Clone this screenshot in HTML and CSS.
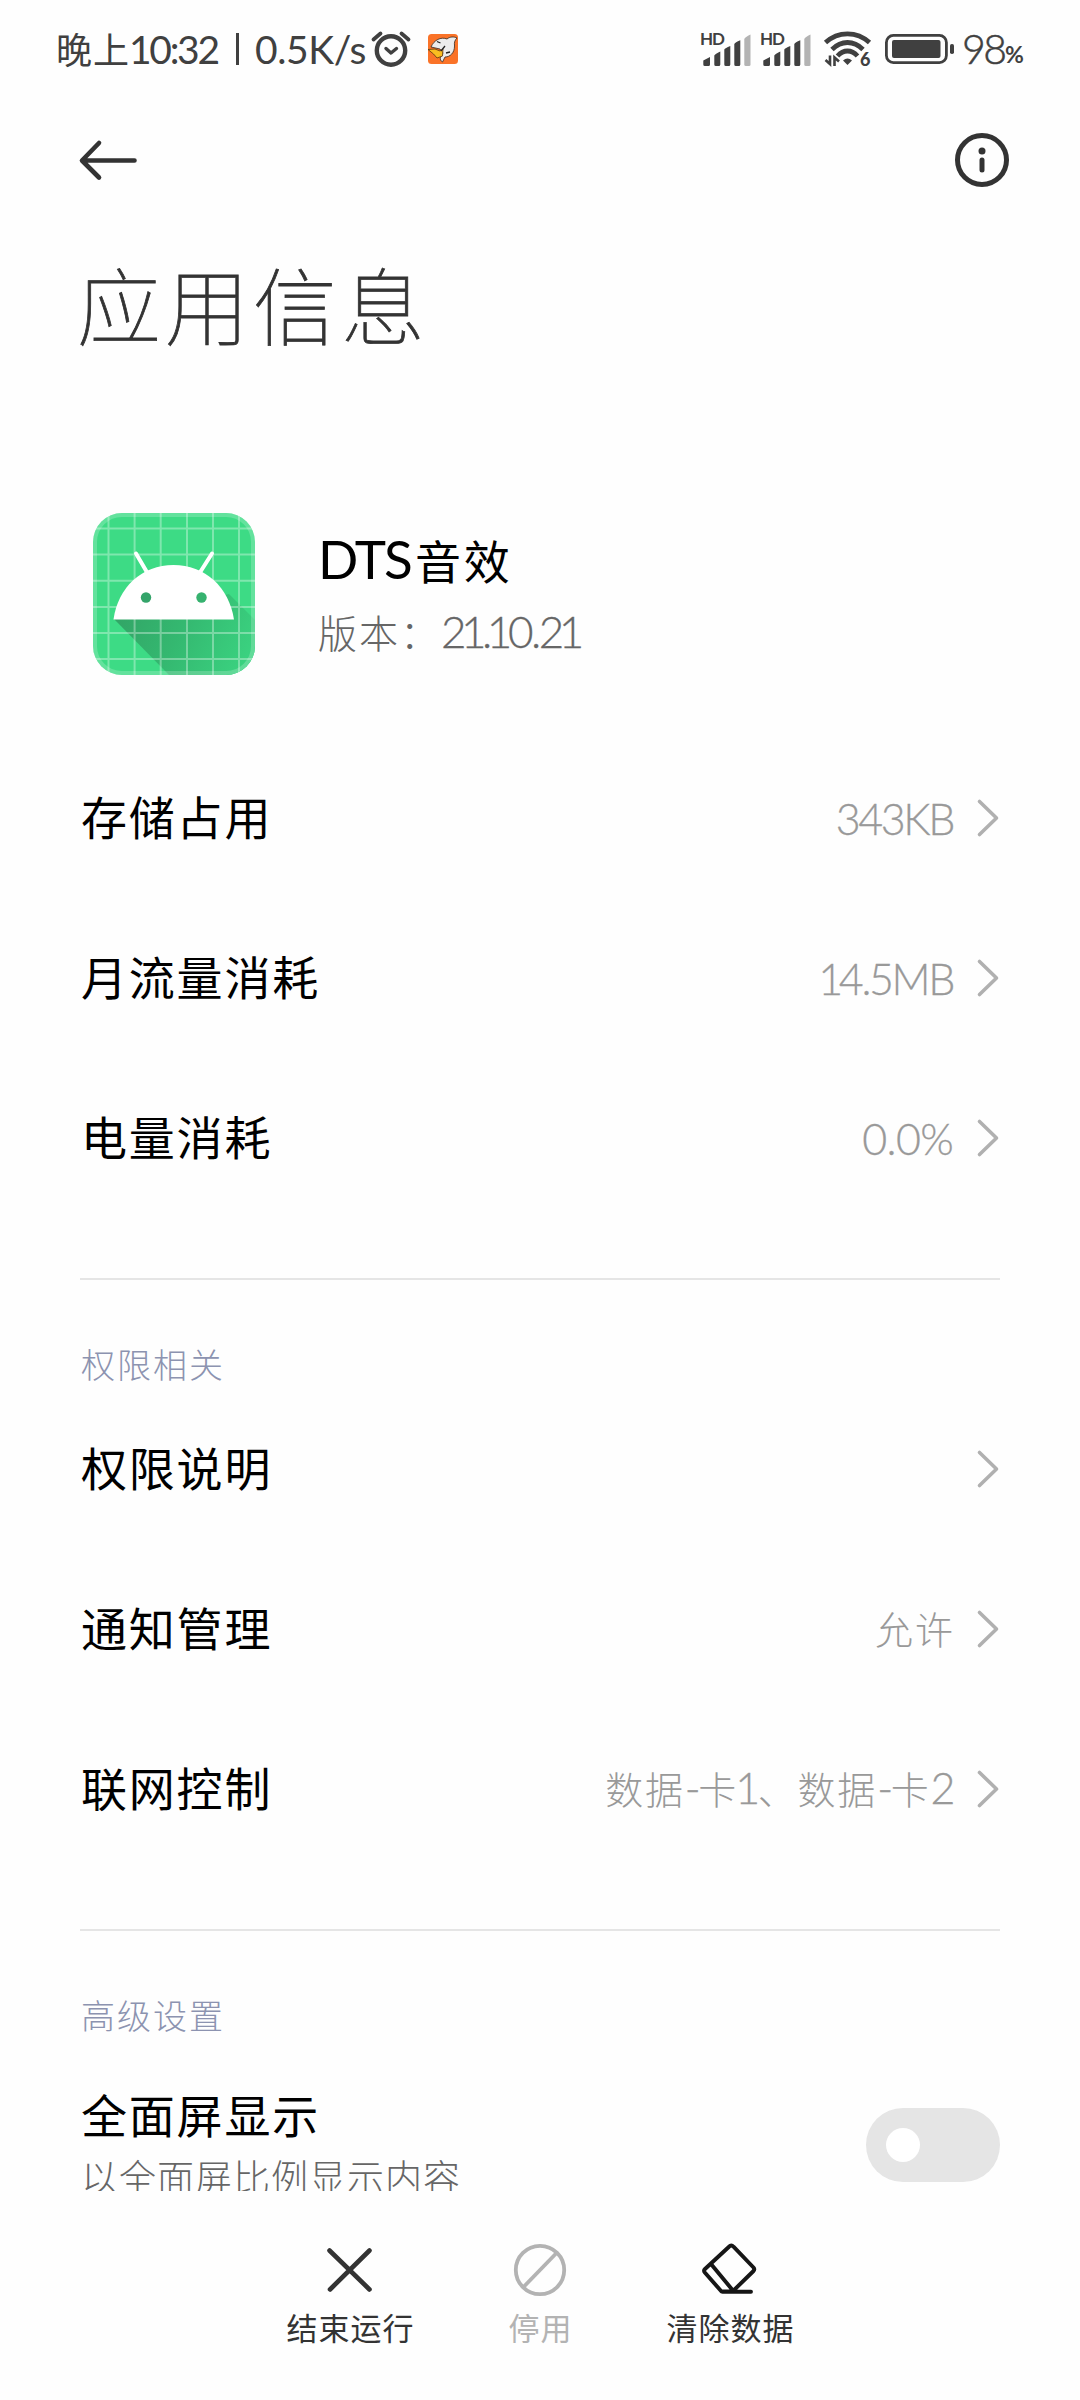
FILE: index.html
```html
<!DOCTYPE html>
<html lang="zh-CN">
<head>
<meta charset="utf-8">
<title>应用信息</title>
<link rel="stylesheet" href="styles.css">
</head>
<body>
<div class="screen">
  <header class="status">
    <div class="status-left">
      <span class="clock-prefix">晚上</span><span class="clock">10:32</span><span class="bar"></span><span class="speed">0.5K/s</span>
      <svg class="alarm" width="40" height="36" viewBox="0 0 40 36" fill="none" stroke="#404040" stroke-linecap="round">
        <circle cx="20" cy="19.500" r="14.200" stroke-width="4.400"/>
        <path d="M2.500 8.500 9.500 2.500M37.500 8.500 30.500 2.500" stroke-width="3.800"/>
        <path d="M15 17.500 20 22 25.500 17.500" stroke-width="3.400" stroke-linejoin="round"/>
      </svg>
      <svg class="shark" width="30" height="30" viewBox="0 0 30 30">
        <rect width="30" height="30" rx="3.500" fill="#fa7328"/>
        <path d="M3 13C6 6 13 2.500 19 5 22 2.500 26 2.500 29 4 27 6 26 8 26.500 12 26.500 19 22 23 17 23L14.500 28C12.500 27 12 25 12.500 23.500L15 19 12 15Z" fill="#ececec" stroke="#33281f" stroke-width=".8"/>
        <path d="M0 15.500 7 15 12 17 15 15 14.500 22 9 24 5.500 20Z" fill="#f9bd20" stroke="#5a3512" stroke-width=".8"/>
        <path d="M9 7.500 12.500 9M17 12 13 17M18 19 22 18" stroke="#222" stroke-width="1.300" fill="none"/>
      </svg>
    </div>
    <div class="status-right">
      <svg class="signal" width="50" height="36" viewBox="0 0 50 36" fill="#404040">
        <text class="hd" x="-1" y="14" textLength="25">HD</text>
        <path d="M2.300 29.500 9 26V33.500Q9 35 7.500 35H3.800Q2.300 35 2.300 33.500ZM13.300 24.500Q14 23 19.300 20.500V33.500Q19.300 35 17.800 35H14.800Q13.300 35 13.300 33.500ZM23.300 18.500Q24 17 29.300 15V33.500Q29.300 35 27.800 35H24.800Q23.300 35 23.300 33.500ZM33.300 13Q34 11.500 39.300 9.300V33.500Q39.300 35 37.800 35H34.800Q33.300 35 33.300 33.500Z"/>
        <path fill="#b3b3b3" d="M43.300 8Q44 6 49.500 3.500V33.500Q49.500 35 48 35H44.800Q43.300 35 43.300 33.500Z"/>
      </svg>
      <svg class="signal" width="50" height="36" viewBox="0 0 50 36" fill="#404040">
        <text class="hd" x="-1" y="14" textLength="25">HD</text>
        <path d="M2.300 29.500 9 26V33.500Q9 35 7.500 35H3.800Q2.300 35 2.300 33.500ZM13.300 24.500Q14 23 19.300 20.500V33.500Q19.300 35 17.800 35H14.800Q13.300 35 13.300 33.500ZM23.300 18.500Q24 17 29.300 15V33.500Q29.300 35 27.800 35H24.800Q23.300 35 23.300 33.500ZM33.300 13Q34 11.500 39.300 9.300V33.500Q39.300 35 37.800 35H34.800Q33.300 35 33.300 33.500Z"/>
        <path fill="#b3b3b3" d="M43.300 8Q44 6 49.500 3.500V33.500Q49.500 35 48 35H44.800Q43.300 35 43.300 33.500Z"/>
      </svg>
      <svg class="wifi" width="48" height="38" viewBox="0 0 48 38">
        <g fill="none" stroke="#404040" stroke-width="4.800">
          <path d="M1.500 12.500Q11 3.800 23.500 3.800T45.500 12.500"/>
          <path d="M8 19.500Q15 12.500 23.500 12.500T39 19.500"/>
          <path d="M13.500 26Q18 21 23.500 21T33.500 26"/>
        </g>
        <path d="M19 30.500Q23.500 26.500 28 30.500L23.500 35Z" fill="#404040"/>
        <path d="M6 25.500V34L1.500 30M10.500 36V27.500L15 31.500" fill="none" stroke="#404040" stroke-width="2.600"/>
        <text class="six" x="36" y="35.500">6</text>
      </svg>
      <svg class="battery" width="70" height="30" viewBox="0 0 70 30">
        <rect x="1.400" y="1.400" width="60" height="27.200" rx="7" fill="none" stroke="#404040" stroke-width="2.800"/>
        <rect x="7" y="6" width="48.500" height="18" rx="2" fill="#404040"/>
        <rect x="65" y="10" width="4" height="10" rx="1.800" fill="#404040"/>
      </svg>
      <span class="level">98</span><span class="percent">%</span>
    </div>
  </header>

  <nav class="appbar">
    <svg width="60" height="44" viewBox="0 0 60 44" fill="none" stroke="#333" stroke-width="4.600" stroke-linecap="round" stroke-linejoin="round">
      <path d="M55.500 22.500H3.500M20 5 3 22.500 20 39.500"/>
    </svg>
    <svg width="54" height="54" viewBox="0 0 54 54">
      <circle cx="27" cy="27" r="24.500" fill="none" stroke="#333" stroke-width="5"/>
      <circle cx="27" cy="18" r="3.500" fill="#333"/>
      <path d="M27 27V37" stroke="#333" stroke-width="5" stroke-linecap="round"/>
    </svg>
  </nav>

  <h1 class="title">应用信息</h1>

  <main class="content">
    <section class="app">
      <svg class="app-icon" width="162" height="162" viewBox="0 0 162 162">
        <defs>
          <clipPath id="round"><rect width="162" height="162" rx="29"/></clipPath>
          <linearGradient id="shade" x1="20" y1="105" x2="150" y2="170" gradientUnits="userSpaceOnUse">
            <stop offset="0" stop-color="#32a466"/><stop offset=".45" stop-color="#34b870"/><stop offset="1" stop-color="#3bd481"/>
          </linearGradient>
        </defs>
        <g clip-path="url(#round)">
          <rect width="162" height="162" fill="#3ddb85"/>
          <path d="M21 106 136 81 162 107V162H76Z" fill="url(#shade)"/>
          <path d="M15.500 0V162M41.600 0V162M67.700 0V162M94 0V162M120 0V162M146 0V162M0 15.500H162M0 41.600H162M0 67.700H162M0 94H162M0 120H162M0 146H162" stroke="#fff" stroke-opacity=".34" stroke-width="2"/>
          <rect x="2" y="2" width="158" height="158" rx="27" fill="none" stroke="#fff" stroke-opacity=".2" stroke-width="4"/>
          <path d="M43 40.500 55 61M119 40.500 106 61" stroke="#fff" stroke-width="4" stroke-linecap="round"/>
          <path d="M20.500 106.500C25 74 49 52 80.500 52S136 74 141 106.500Z" fill="#fff"/>
          <circle cx="53" cy="84.500" r="5.200" fill="#34a46a"/>
          <circle cx="108.500" cy="84.500" r="5.200" fill="#36b26f"/>
        </g>
      </svg>
      <div class="app-text">
        <div class="app-name"><span class="latin">DTS</span>音效</div>
        <div class="app-version">版本：<span class="latin">2<span class="one">1</span>.<span class="one">1</span>0.2<span class="one">1</span></span></div>
      </div>
    </section>

    <div class="row"><span class="label">存储占用</span><span class="value latin">343KB</span><svg class="chev" viewBox="0 0 22 38"><path d="M2.500 2.500 19.500 19 2.500 35.500"/></svg></div>
    <div class="row"><span class="label">月流量消耗</span><span class="value latin"><span class="one">1</span>4.5MB</span><svg class="chev" viewBox="0 0 22 38"><path d="M2.500 2.500 19.500 19 2.500 35.500"/></svg></div>
    <div class="row"><span class="label">电量消耗</span><span class="value latin percent-value">0.0%</span><svg class="chev" viewBox="0 0 22 38"><path d="M2.500 2.500 19.500 19 2.500 35.500"/></svg></div>

    <hr class="divider">
    <h2 class="group">权限相关</h2>
    <div class="row"><span class="label">权限说明</span><svg class="chev" viewBox="0 0 22 38"><path d="M2.500 2.500 19.500 19 2.500 35.500"/></svg></div>
    <div class="row"><span class="label">通知管理</span><span class="value han">允许</span><svg class="chev" viewBox="0 0 22 38"><path d="M2.500 2.500 19.500 19 2.500 35.500"/></svg></div>
    <div class="row"><span class="label">联网控制</span><span class="value han network">数据<span class="latin">-</span>卡<span class="latin one">1</span>、数据<span class="latin">-</span>卡<span class="latin">2</span></span><svg class="chev" viewBox="0 0 22 38"><path d="M2.500 2.500 19.500 19 2.500 35.500"/></svg></div>

    <hr class="divider">
    <h2 class="group">高级设置</h2>
    <div class="row switch-row">
      <div class="switch-text">
        <div class="label">全面屏显示</div>
        <div class="hint">以全面屏比例显示内容</div>
      </div>
      <div class="switch"><span class="knob"></span></div>
    </div>
  </main>

  <footer class="actions">
    <button class="action">
      <svg width="56" height="56" viewBox="0 0 56 56" fill="none" stroke="#333" stroke-width="4.600" stroke-linecap="round"><path d="M7.500 8.500 47.500 47.500M47.500 8.500 8 47.500"/></svg>
      <span>结束运行</span>
    </button>
    <button class="action disabled">
      <svg width="56" height="56" viewBox="0 0 56 56" fill="none" stroke="#b3b3b3" stroke-width="3.800"><circle cx="28" cy="28" r="24.200"/><path d="M44.500 11 11.500 45"/></svg>
      <span>停用</span>
    </button>
    <button class="action">
      <svg width="56" height="56" viewBox="0 0 56 56" fill="none" stroke="#161616" stroke-width="3.900" stroke-linecap="round" stroke-linejoin="round"><path d="M27 4.700Q29.300 2.300 31.500 4.700L51.500 25.500Q53 27.300 51.500 29L30.500 49.500 19.500 49.500 2.800 30.500Q1.300 28.700 3 27ZM9 22 30.500 48M20.500 49.700H49"/></svg>
      <span>清除数据</span>
    </button>
  </footer>
</div>
</body>
</html>
```
FILE: styles.css
```css
* { box-sizing: border-box; margin: 0; padding: 0; }

body {
  width: 1080px;
  height: 2400px;
  overflow: hidden;
  background: #fefefe;
  font-family: "Noto Sans CJK SC", sans-serif;
}

svg { display: block; flex: none; overflow: visible; }

.latin { font-family: Lato, sans-serif; }

.screen {
  display: flex;
  flex-direction: column;
  width: 1080px;
  height: 2400px;
}

/* Status bar */
.status {
  display: flex;
  justify-content: space-between;
  height: 98px;
  padding: 0 54px 0 56px;
  color: #404040;
}

.status-left, .status-right { display: flex; align-items: center; white-space: nowrap; }

.clock-prefix { width: 73px; padding-bottom: 3px; font-size: 36px; font-weight: 400; letter-spacing: 1px; }
.clock, .speed { font-family: Lato, sans-serif; font-size: 39px; line-height: 60px; }
.clock { width: 91px; letter-spacing: -2.3px; }
.bar { width: 3px; height: 32px; margin: 0 16px; background: #404040; }
.speed { width: 115px; letter-spacing: -.4px; }
.alarm { margin-left: 1px; }
.shark { margin-left: 17px; }

.signal { margin-right: 10px; }
.hd { font: 700 17px Lato, sans-serif; }
.six { font: 900 18px Lato, sans-serif; fill: #404040; }
.wifi { margin: 0 13px 0 3px; }
.battery { margin-right: 7px; }
.level { width: 43px; font: 300 41px/60px Lato, sans-serif; letter-spacing: -2.5px; -webkit-text-stroke: .5px #404040; }
.percent { width: 21px; padding-top: 9px; font: 700 23px/40px Lato, sans-serif; }

/* Navigation and title */
.appbar {
  display: flex;
  align-items: center;
  justify-content: space-between;
  height: 124px;
  padding: 0 71px 0 79px;
}

.title {
  height: 170px;
  padding-left: 77px;
  font-size: 84px;
  font-weight: 100;
  letter-spacing: 4px;
  line-height: 161px;
  color: #333;
  -webkit-text-stroke: .8px #333;
}

/* Scrolling content */
.content {
  height: 1799px;
  padding: 0 80px;
  overflow: hidden;
}

.app {
  display: flex;
  height: 346px;
  padding: 121px 0 0 13px;
}

.app-text { padding: 9px 0 0 63px; white-space: nowrap; }
.app-name { height: 74px; font-size: 46px; line-height: 74px; color: #000; letter-spacing: 2.6px; }
.app-name .latin { margin-right: 4px; font-size: 53px; letter-spacing: -1.8px; }
.app-version { height: 70px; font-size: 39px; font-weight: 300; line-height: 70px; color: #666; letter-spacing: 2px; }
.app-version .latin { font-size: 44px; letter-spacing: -2.5px; -webkit-text-stroke: .3px #666; }

.one { margin: 0 -2px 0 -3px; }

.row {
  display: flex;
  align-items: center;
  height: 160px;
}

.label {
  flex: 1;
  padding: 0 0 6px 1px;
  font-size: 46px;
  line-height: 68px;
  letter-spacing: 1.8px;
  color: #000;
}

.value {
  margin-right: 24px;
  font-size: 38px;
  font-weight: 300;
  letter-spacing: 2px;
  color: #999;
}

.value.han { padding-bottom: 4px; margin-right: 22px; }
.value.network { margin-right: 24px; letter-spacing: 1.8px; }
.value.latin, .value .latin { font-size: 43px; letter-spacing: -2.4px; -webkit-text-stroke: .3px #999; }
.value .latin.one { margin: 0 0 0 -3px; }
.value.percent-value { letter-spacing: -.7px; }

.chev {
  width: 22px;
  height: 38px;
  margin-right: 1px;
  fill: none;
  stroke: #b0b0b0;
  stroke-width: 3.6px;
  stroke-linecap: round;
  stroke-linejoin: round;
}

.divider { height: 2px; margin-top: 60px; border: 0; background: #e5e5e5; }

.group {
  height: 109px;
  padding: 59px 0 0 1px;
  font-size: 34px;
  font-weight: 300;
  letter-spacing: 2px;
  line-height: 50px;
  color: #8c93b0;
}

.switch-row { align-items: flex-start; }
.switch-text { flex: 1; padding-top: 39px; }
.switch-text .label { padding-bottom: 0; }
.hint { padding: 4px 0 0 1px; font-size: 37px; font-weight: 300; line-height: 50px; letter-spacing: 1px; color: #666; }

.switch {
  display: flex;
  align-items: center;
  width: 134px;
  height: 74px;
  margin-top: 68px;
  padding-left: 20px;
  border-radius: 37px;
  background: #e5e5e5;
}

.knob { width: 34px; height: 34px; border-radius: 50%; background: #fff; }

/* Bottom actions */
.actions {
  display: flex;
  justify-content: center;
  height: 209px;
  padding-top: 51px;
}

.action {
  display: flex;
  flex-direction: column;
  align-items: center;
  width: 190px;
  border: 0;
  background: none;
  color: #333;
  font: 400 31px/50px "Noto Sans CJK SC", sans-serif;
}

.action span { margin-top: 4px; padding-left: 1px; letter-spacing: 1px; }
.action.disabled { color: #b3b3b3; }
```
